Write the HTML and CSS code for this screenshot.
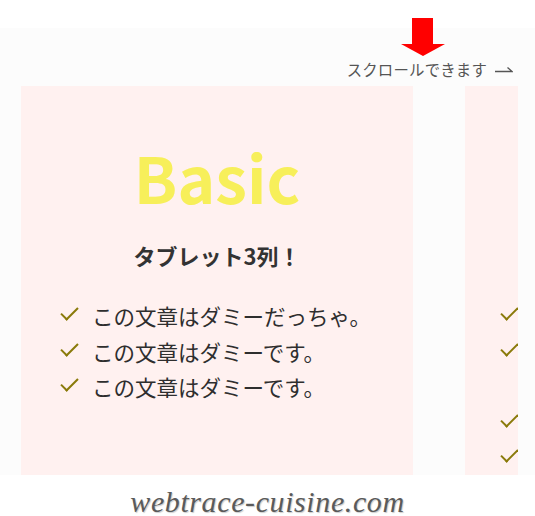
FILE: index.html
```html
<!DOCTYPE html>
<html lang="ja">
<head>
<meta charset="utf-8">
<title>Basic</title>
<link rel="stylesheet" href="styles.css">
</head>
<body>
<div class="page">
  <svg class="down-arrow" width="44" height="38" viewBox="0 0 44 38" aria-hidden="true">
    <polygon points="11,0 32,0 32,26 44,26 22,38 0,26 11,26" fill="#ff0000"/>
  </svg>
  <section class="band">
    <p class="hint">スクロールできます<svg class="hint-arrow" width="18" height="8" viewBox="0 0 18 8" aria-hidden="true"><path d="M0 6.5 H17 L12.5 2.5" fill="none" stroke="#555" stroke-width="1.3"/></svg></p>
    <div class="scroller">
      <article class="card">
        <h2 class="card-title">Basic</h2>
        <p class="card-sub">タブレット3列！</p>
        <ul class="checks">
          <li>この文章はダミーだっちゃ。</li>
          <li>この文章はダミーです。</li>
          <li>この文章はダミーです。</li>
        </ul>
      </article>
      <article class="card card-second">
        <h2 class="card-title">Standard</h2>
        <p class="card-sub">タブレット3列！</p>
        <ul class="checks">
          <li>この文章はダミーです。</li>
          <li>この文章はダミーです。この文章はダミーです。</li>
          <li>この文章はダミーです。</li>
          <li>この文章はダミーです。</li>
        </ul>
      </article>
    </div>
  </section>
  <p class="watermark">webtrace-cuisine.com</p>
</div>
</body>
</html>
```
FILE: styles.css
```css
html, body {
  margin: 0;
  padding: 0;
  background: #ffffff;
}
body {
  font-family: "Noto Sans CJK JP", "Noto Sans", sans-serif;
  color: #333333;
}
.page {
  position: relative;
  width: 535px;
  height: 516px;
  overflow: hidden;
}
.down-arrow {
  position: absolute;
  left: 401px;
  top: 18px;
}
.band {
  margin-top: 28px;
  background: #fcfcfc;
  padding-left: 21px;
}
.hint {
  margin: 0;
  padding-top: 31px;
  padding-right: 22px;
  height: 20px;
  line-height: 20px;
  text-align: right;
  font-size: 15.4px;
  letter-spacing: 0.2px;
  color: #555555;
  box-sizing: content-box;
}
.hint-arrow {
  margin-left: 8px;
  vertical-align: 3px;
}
.scroller {
  margin-top: 7px;
  width: 497px;
  display: flex;
  gap: 52px;
  overflow: hidden;
}
.card {
  flex: 0 0 392px;
  height: 389px;
  box-sizing: border-box;
  background: #fff1f0;
  padding-top: 58px;
}
.card-title {
  margin: 0;
  text-align: center;
  font-size: 64px;
  line-height: 64px;
  font-weight: 700;
  color: #f7ef5a;
}
.card-sub {
  margin: 32px 0 0;
  text-align: center;
  font-size: 22px;
  line-height: 30px;
  font-weight: 700;
  color: #333333;
}
.checks {
  list-style: none;
  margin: 28px 0 0;
  padding: 0 0 0 71px;
}
.checks li {
  position: relative;
  font-size: 21.5px;
  line-height: 35.5px;
  color: #2e2e2e;
}
.checks li::before {
  content: "";
  position: absolute;
  left: -31px;
  top: 9px;
  width: 15px;
  height: 7px;
  border-left: 2px solid #8a7a0a;
  border-bottom: 2px solid #8a7a0a;
  transform: rotate(-45deg);
}
.card-second .checks {
  margin-top: 28px;
  padding-left: 67px;
  padding-right: 20px;
}
.watermark {
  margin: 0;
  padding-top: 7px;
  text-align: center;
  font-family: "Liberation Serif", serif;
  font-style: italic;
  font-size: 30px;
  line-height: 40px;
  letter-spacing: 0.6px;
  color: #5a5a5a;
  text-shadow: 1px 1px 1px #cccccc;
}
```
